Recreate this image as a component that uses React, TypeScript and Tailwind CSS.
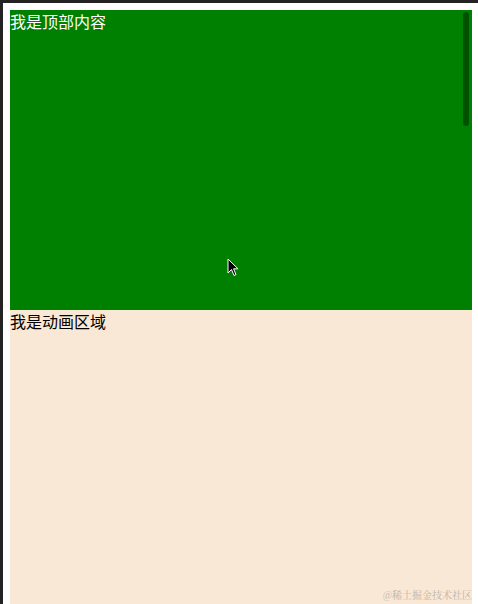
export default function App() {
  return (
    <div
      className="relative h-[604px] w-[478px] overflow-hidden border-l-[3px] border-t-[3px] border-[#232323] bg-white pl-[7px] pt-[7px]"
      style={{ fontFamily: '"Noto Sans CJK SC", "Noto Sans", sans-serif' }}
    >
      <div className="relative h-[300px] w-[462px] bg-[#008000] text-[16px] leading-[22px] text-white">
        <div>我是顶部内容</div>
        <div className="absolute right-[3px] top-[2px] h-[114px] w-[6px] rounded-full bg-[#005200]" />
        <svg
          className="absolute left-[217px] top-[248px]"
          width="12"
          height="19"
          viewBox="0 0 12 19"
        >
          <path
            d="M1 1 L1 15 L4.5 11.5 L7 17.5 L9 16.6 L6.6 10.8 L11 10.8 Z"
            fill="#000"
            stroke="#fff"
            strokeWidth="1"
            strokeLinejoin="round"
          />
        </svg>
      </div>
      <div className="h-[294px] w-[462px] bg-[#f9e8d5] text-[16px] leading-[22px] text-black">
        <div>我是动画区域</div>
      </div>
      <div
        className="absolute bottom-[3px] right-[6px] whitespace-nowrap text-[10px] leading-[13px] text-[#b9b2aa]"
        style={{ fontFamily: '"Noto Serif CJK SC", "Noto Sans CJK SC", serif' }}
      >
        @稀土掘金技术社区
      </div>
    </div>
  );
}
